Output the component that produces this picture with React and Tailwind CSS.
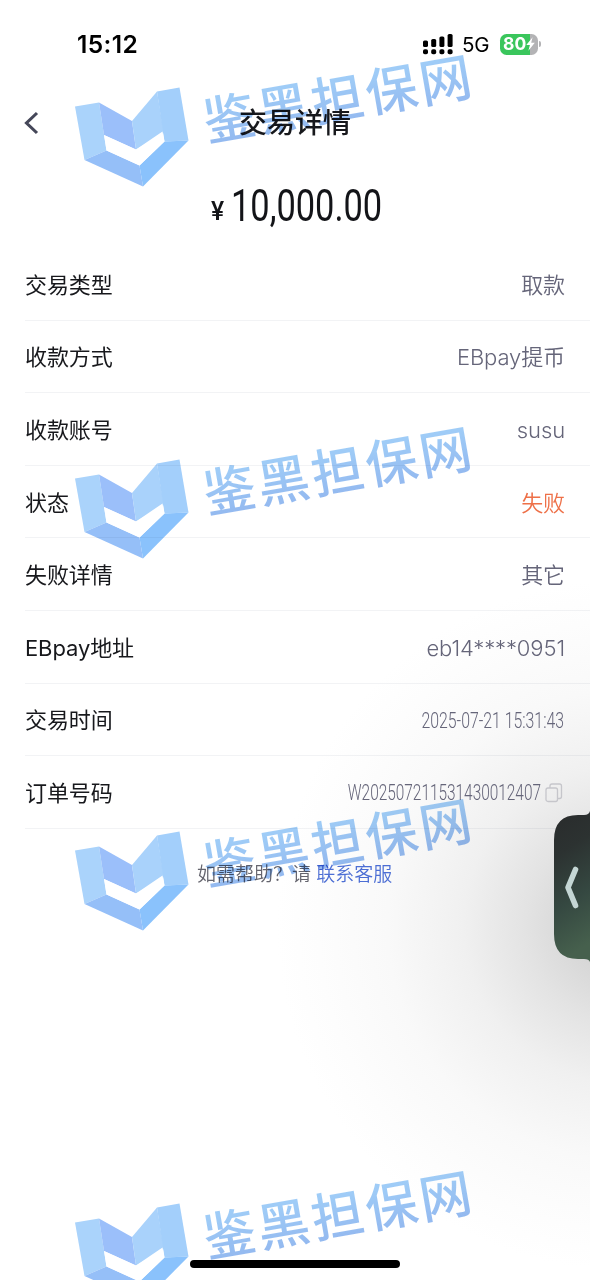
import React from 'react';

const rows = [
  { label: '交易类型', value: '取款' },
  { label: '收款方式', value: 'EBpay提币' },
  { label: '收款账号', value: 'susu' },
  { label: '状态', value: '失败', tone: 'text-[#ee7048]' },
  { label: '失败详情', value: '其它' },
  { label: 'EBpay地址', value: 'eb14****0951' },
  { label: '交易时间', value: '2025-07-21 15:31:43', kind: 'time' },
  { label: '订单号码', value: 'W202507211531430012407', kind: 'order' },
];

function StatusBar() {
  return (
    <div className="flex h-[88px] items-center justify-between pr-[49px] pl-[77px] text-black">
      <span className="text-[24.5px] leading-none font-semibold tracking-[0.4px]">15:12</span>
      <div className="flex items-center">
        <svg className="h-[21px] w-[30px]" viewBox="0 0 30 21">
          <rect x="0" y="6.5" width="5" height="6.5" rx="1.6" />
          <rect x="8.2" y="5" width="5" height="8" rx="1.6" />
          <rect x="16.4" y="2.5" width="5" height="10.5" rx="1.6" />
          <rect x="24.6" y="0" width="5" height="13" rx="1.6" />
          <rect x="0" y="15.3" width="5" height="5" rx="1.8" />
          <rect x="8.2" y="15.3" width="5" height="5" rx="1.8" />
          <rect x="16.4" y="15.3" width="5" height="5" rx="1.8" />
          <rect x="24.6" y="15.3" width="5" height="5" rx="1.8" />
        </svg>
        <span className="ml-[9px] w-[29px] pt-[2px] text-[20.5px] leading-none tracking-[-0.1px] whitespace-nowrap">5G</span>
        <div className="ml-[9px] flex items-center">
          <div className="flex h-[21px] w-[38px] items-center overflow-hidden rounded-[6.5px] bg-[linear-gradient(90deg,#3ac65c_80%,#b3b3b5_80%)] pl-[3px]">
            <span className="text-[17.5px] leading-none font-bold text-white">80</span>
            <svg className="h-[14px] w-[9px]" viewBox="0 0 9 14">
              <path d="M6.6 0.3 0.3 7.9h3.6L2.4 13.7 8.8 5.8H5.2Z" fill="#fff" />
            </svg>
          </div>
          <div className="ml-[1px] h-[6px] w-[2px] rounded-r-full bg-[#b3b3b5]" />
        </div>
      </div>
    </div>
  );
}

function Header() {
  return (
    <div className="grid h-[72px] grid-cols-[64px_1fr_64px] items-center">
      <svg className="mb-[2px] ml-[24px] h-[24px] w-[15px]" viewBox="0 0 15 24" fill="none" stroke="#454759" strokeWidth="3.1">
        <path d="M13 2 2.5 12 13 22" />
      </svg>
      <h1 className="pb-[2px] text-center text-[28px] leading-[40px] font-medium text-[#17181c]">交易详情</h1>
    </div>
  );
}

function Amount() {
  return (
    <div className="flex h-[88px] items-start pt-[20px] pl-[211px] font-['Roboto','Noto_Sans_CJK_SC',sans-serif] text-[#131418]">
      <span className="w-[20px] pt-[15px] text-[26px] leading-[32px] font-medium">
        <span className="inline-block origin-left scale-x-[.95]">¥</span>
      </span>
      <span className="inline-block origin-left scale-x-[.782] text-[44px] leading-[52px] whitespace-nowrap">10,000.00</span>
    </div>
  );
}

function CopyIcon() {
  return (
    <svg className="mr-[2px] ml-[4px] h-[20px] w-[18px] shrink-0" viewBox="0 0 18 20" fill="none" stroke="#c6c6cb" strokeWidth="1.3">
      <rect x="1" y="5" width="11.5" height="13.5" rx="2" />
      <path d="M5 5V3a2 2 0 0 1 2-2h7.5a2 2 0 0 1 2 2v10.500a2 2 0 0 1-2 2h-2" />
    </svg>
  );
}

function Value({ row }) {
  if (row.kind === 'time') {
    return (
      <div className="flex w-[145px] justify-end pr-[1px] pt-[1px] font-['Roboto',sans-serif] text-[22px] font-[350] whitespace-nowrap">
        <span className="inline-block origin-right scale-x-[.72]">{row.value}</span>
      </div>
    );
  }
  if (row.kind === 'order') {
    return (
      <div className="flex items-center">
        <div className="flex w-[195px] justify-end pt-[1px] font-['Roboto',sans-serif] text-[22px] font-[350] whitespace-nowrap">
          <span className="inline-block origin-right scale-x-[.7]">{row.value}</span>
        </div>
        <CopyIcon />
      </div>
    );
  }
  return <span className={`font-[350] tracking-[-0.1px] ${row.tone ?? ''}`}>{row.value}</span>;
}

function Watermark() {
  return (
    <div className="flex h-[372px] shrink-0 items-start">
      <svg className="mt-[87px] ml-[74px] h-[101px] w-[116px] shrink-0" viewBox="74 87 116 101">
        <path d="M75 106.500 99 102.500 106.500 150.500 84.500 160Z" fill="#aad3fb" />
        <path d="M99 102.500 132 121 136 149.500 104 135Z" fill="#9bbffa" />
        <path d="M132 121 157 91.500 164 133 136 149.500Z" fill="#a9d2fb" />
        <path d="M157 91.500 179.500 87.500 188.500 140.500 164.500 141.500Z" fill="#a3cffb" />
        <path d="M84.500 160 106.500 150.500 139.500 165.500 143 186.500Z" fill="#95bff8" />
        <path d="M139.500 165.500 164.500 141.500 188.500 140.500 143 186.500Z" fill="#8ac2fc" />
        <path d="M104 135 136 149.500 162.500 131.500 164.500 141.500 139.500 165.500 106.500 150.500Z" fill="#fff" />
      </svg>
      <span className="mt-[65px] ml-[12px] -rotate-[9.9deg] bg-[linear-gradient(180deg,#9fccf7_20%,#94baf0_80%)] bg-clip-text text-[52px] leading-[70px] font-medium tracking-[2.800px] whitespace-nowrap text-transparent">鉴黑担保网</span>
    </div>
  );
}

export default function App() {
  return (
    <div className="relative flex h-[1280px] w-[590px] flex-col overflow-hidden bg-white bg-[radial-gradient(circle_345px_at_622px_925px,#cdcdcd_0%,#d5d5d5_12%,#e3e3e3_28%,#f0f0f0_46%,#f9f9f9_68%,#fdfdfd_88%,#ffffff_100%)] font-['Inter','Noto_Sans_CJK_SC',sans-serif]">
      <StatusBar />
      <Header />
      <Amount />
      <div className="flex flex-col pl-[25px]">
        {rows.map((row) => (
          <div key={row.label} className="flex h-[72.600px] items-center justify-between border-b border-[#5b6285]/8 pt-[2px] pr-[25px] text-[22px] leading-[32px] text-[#656579]">
            <span className="tracking-[-0.1px] text-[#17181c]">{row.label}</span>
            <Value row={row} />
          </div>
        ))}
      </div>
      <div className="mt-[32px] pl-[197px] text-[19px] leading-[28px] font-[350] text-[#65656e]">
        如需帮助？请 <span className="text-[#4c6ed4]">联系客服</span>
      </div>

      <div className="pointer-events-none absolute inset-0 flex flex-col overflow-hidden mix-blend-multiply">
        <Watermark />
        <Watermark />
        <Watermark />
        <Watermark />
      </div>

      <svg className="absolute top-[808px] right-0 h-[158px] w-[36px]" viewBox="0 0 36 158">
        <defs>
          <linearGradient id="tab" x1="0" y1="0" x2="0.15" y2="1">
            <stop offset="0" stopColor="#292b2c" />
            <stop offset="0.3" stopColor="#2c3231" />
            <stop offset="0.65" stopColor="#354841" />
            <stop offset="1" stopColor="#46604d" />
          </linearGradient>
        </defs>
        <path d="M36 3Q35 7 30 7H24Q0 7 0 32V126Q0 151 24 151H30Q35 151 36 154Z" fill="url(#tab)" />
        <path d="M21.500 61.500 14 79.500 21.500 97.500" fill="none" stroke="#c4d6d4" strokeWidth="5.600" strokeLinecap="round" strokeLinejoin="round" />
      </svg>
      <div className="absolute bottom-[12px] left-[190px] h-[8px] w-[210px] rounded-full bg-black" />
    </div>
  );
}
